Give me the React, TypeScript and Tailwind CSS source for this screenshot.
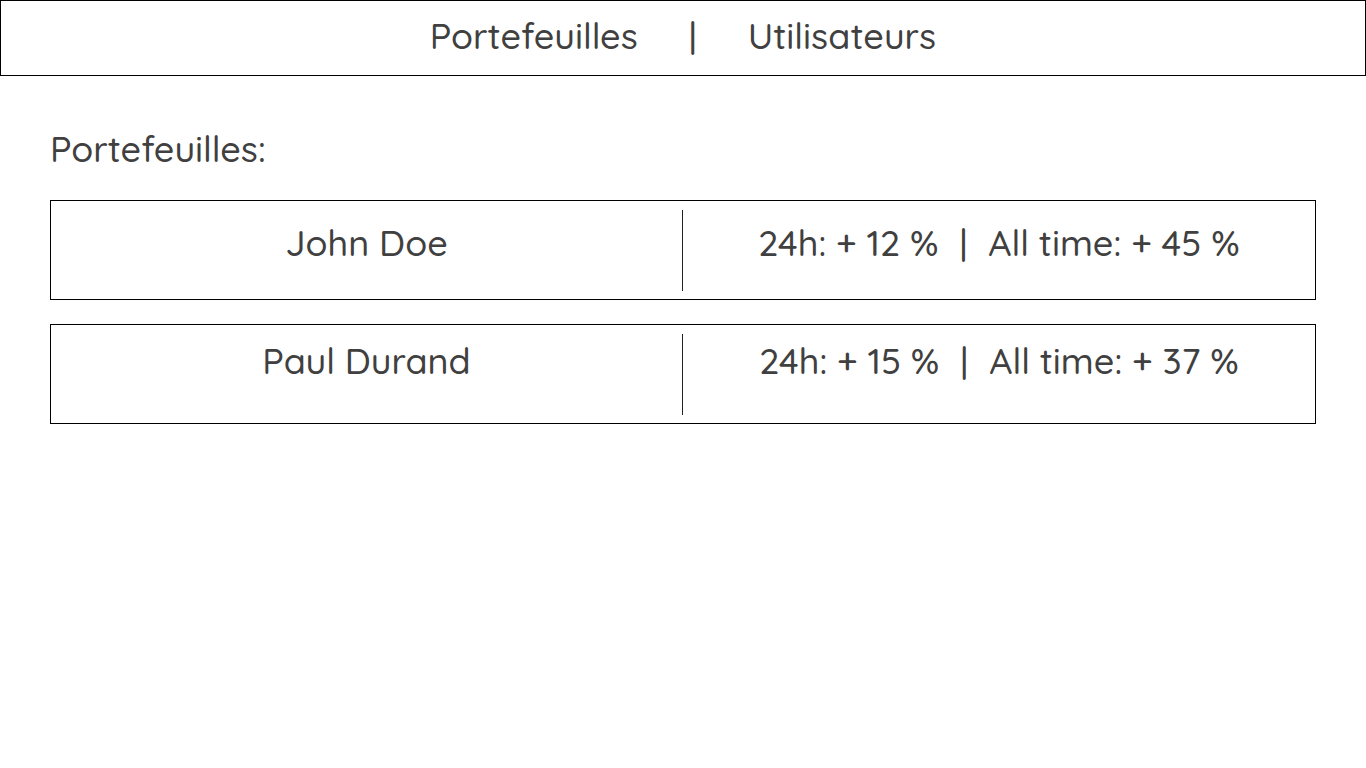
const wallets = [
  { name: 'John Doe', day: '24h: + 12 %', total: 'All time: + 45 %', offset: 'pt-[13px]' },
  { name: 'Paul Durand', day: '24h: + 15 %', total: 'All time: + 37 %', offset: 'pt-[7px]' },
];

export default function App() {
  return (
    <div className="min-h-screen bg-white font-['Quicksand','Lato',sans-serif] text-4xl font-medium text-[#404040]">
      <header className="border border-black pt-[15px] pb-[19px]">
        <nav className="flex items-center justify-center gap-[51px]">
          <a href="#portefeuilles">Portefeuilles</a>
          <span aria-hidden="true">|</span>
          <a href="#utilisateurs">Utilisateurs</a>
        </nav>
      </header>
      <main id="portefeuilles" className="px-[50px] pt-[53px]">
        <h1>Portefeuilles:</h1>
        <ul className="mt-[31px] flex flex-col gap-6">
          {wallets.map((w) => (
            <li key={w.name} className="grid h-[100px] grid-cols-2 border border-black pt-[9px] pb-2">
              <div className={`border-r border-[#222222] text-center ${w.offset}`}>
                {w.name}
              </div>
              <div className={`flex justify-center gap-[21px] ${w.offset}`}>
                <span>{w.day}</span>
                <span aria-hidden="true">|</span>
                <span>{w.total}</span>
              </div>
            </li>
          ))}
        </ul>
      </main>
    </div>
  );
}
